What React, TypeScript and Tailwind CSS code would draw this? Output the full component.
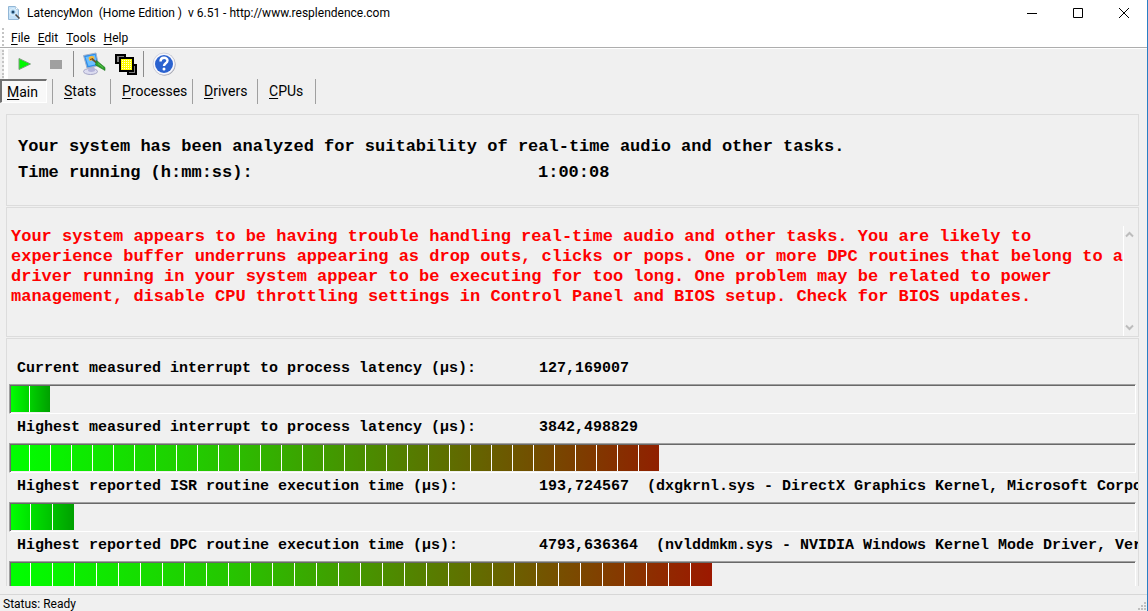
import type { ReactNode } from 'react';

interface Measurement {
  label: string;
  value: string;
  detail?: string;
  blocks: string[];
  first: string;
  fill: string;
}

const narrow = 'w-[20px]';
const wide = 'w-[21px]';

const measurements: Measurement[] = [
  { label: 'Current measured interrupt to process latency (µs):', value: '127,169007', blocks: Array(1).fill(narrow), first: 'w-[18px]', fill: 'from-[#00ff00] to-[#00a000]' },
  { label: 'Highest measured interrupt to process latency (µs):', value: '3842,498829', blocks: Array(30).fill(narrow), first: 'w-[18px]', fill: 'from-[#00ff00] via-[#24c800] via-30% to-[#902000]' },
  { label: 'Highest reported ISR routine execution time (µs):', value: '193,724567', detail: '(dxgkrnl.sys - DirectX Graphics Kernel, Microsoft Corporation)', blocks: Array(2).fill(wide), first: 'w-[19px]', fill: 'from-[#00ff00] to-[#00a000]' },
  { label: 'Highest reported DPC routine execution time (µs):', value: '4793,636364', detail: '(nvlddmkm.sys - NVIDIA Windows Kernel Mode Driver, Version 388.13)', blocks: Array(31).fill(wide), first: 'w-[19px]', fill: 'from-[#00ff00] via-[#24c800] via-30% to-[#9c1800]' },
];

const tabs = [
  { name: 'Stats', width: 'w-[58px]' },
  { name: 'Processes', width: 'w-[82px]' },
  { name: 'Drivers', width: 'w-[65px]' },
  { name: 'CPUs', width: 'w-[58px]' },
];

function Mnemonic({ text }: { text: string }) {
  return <><span className="underline underline-offset-2">{text[0]}</span>{text.slice(1)}</>;
}

function AppIcon() {
  return (
    <svg width="16" height="16" viewBox="0 0 16 16">
      <path d="M2.500 1.500h7l3 3v10h-10z" fill="#c3e1f8" stroke="#93b7d6" />
      <path d="M9.500 1.500v3h3" fill="#fff" stroke="#b4cde0" />
      <circle cx="7" cy="7" r="3.300" fill="#a9d4f2" stroke="#e8f4fc" />
      <circle cx="7" cy="7" r="1.500" fill="#1c4568" />
      <path d="M9.500 9.500l4 4" stroke="#4a4540" strokeWidth="1.600" />
    </svg>
  );
}

function ConfigureIcon() {
  return (
    <svg width="24" height="24" viewBox="0 0 24 24">
      <ellipse cx="8.500" cy="19.500" rx="7" ry="3" fill="#dcdcf0" stroke="#a5a5c6" />
      <path d="M7 14l5-1 1 6q-4 2-7 0z" fill="#b4b4da" />
      <path d="M1.500 3.500L14 1l2.500 12.500L5 16z" fill="#2f8eea" stroke="#a3b1c8" />
      <path d="M3.500 5l9.500-2 2 9-8.500 2z" fill="#6cc0ff" />
      <path d="M6.500 6c2-3 6-2 6 0l-1 2-4 1z" fill="#f4b83a" />
      <path d="M8 7.500l3-1" stroke="#7b4a10" />
      <path d="M10 7l5 4" stroke="#6e5530" strokeWidth="2" />
      <path d="M14.500 8.500l8.500 7v3l-9.500-5.500z" fill="#2ba02b" stroke="#1c741c" strokeWidth="0.600" />
      <path d="M16 11.500l5 4" stroke="#5cc44c" />
    </svg>
  );
}

function WindowsIcon() {
  return (
    <svg width="22" height="21" viewBox="0 0 22 21" shapeRendering="crispEdges">
      <path d="M0 0h11v10H0zM12 10h10v11H12z" fill="#000" />
      <path d="M2 2h7v6H2zM14 12h6v7h-6z" fill="#808080" />
      <path d="M4 3h15v15H4z" fill="#000" />
      <path d="M6 5h11v11H6z" fill="#ffff00" />
      {[6, 8, 10, 12, 14].map((y) => [7, 9, 11, 13, 15].map((x) => <rect key={x + '-' + y} x={x} y={y} width="1" height="1" fill="#fffde0" />))}
    </svg>
  );
}

function HelpIcon() {
  return (
    <svg width="24" height="24" viewBox="0 0 24 24">
      <circle cx="12.500" cy="12.500" r="11" fill="#9c9ca6" />
      <circle cx="12" cy="12" r="11" fill="#f7f7fc" stroke="#b3b7c6" strokeWidth="0.500" />
      <circle cx="12" cy="12" r="9" fill="#2a62cf" />
      <path d="M8.500 9.500c0-5 7-4.500 7-1 0 3-3.500 2.500-3.500 5.500" fill="none" stroke="#fff" strokeWidth="2.400" />
      <circle cx="12" cy="17" r="1.500" fill="#fff" />
    </svg>
  );
}

function ToolButton({ label, children }: { label: string; children: ReactNode }) {
  return <button aria-label={label} className="flex h-7 w-8 items-center justify-center">{children}</button>;
}

function Meter({ item }: { item: Measurement }) {
  return (
    <div>
      <div className="flex h-[29px] items-center overflow-hidden whitespace-pre pl-2 font-['Liberation_Mono',monospace] text-[15px] font-bold">
        <span className="w-[522px] shrink-0">{item.label}</span>
        <span>{item.value}{item.detail && '  ' + item.detail}</span>
      </div>
      <div className="mr-[2px] h-[30px] border border-b-white border-l-[#a0a0a0] border-r-white border-t-[#a0a0a0]">
        <div className="h-full border-l border-t border-[#696969]">
          <div className={'flex h-[26px] w-fit gap-px bg-linear-to-r/srgb ' + item.fill}>
            <span className={'box-content border-r border-white ' + item.first} />
            {item.blocks.map((w, i) => <span key={i} className={i < item.blocks.length - 1 ? '-ml-px box-content border-r border-white ' + w : '-ml-px ' + w} />)}
          </div>
        </div>
      </div>
    </div>
  );
}

export default function App() {
  return (
    <div className="flex h-screen flex-col overflow-hidden border-r border-[#2a7fc4] bg-[#f0f0f0] font-['Roboto',sans-serif] text-black">
      <header className="flex h-[26px] shrink-0 items-center bg-white pl-[6px] text-[12px]">
        <AppIcon />
        <h1 className="flex-1 whitespace-pre pl-[5px]">LatencyMon  (Home Edition )  v 6.51 - http://www.resplendence.com</h1>
        <div className="flex">
          <button aria-label="Minimize" className="flex w-[46px] justify-center"><svg width="10" height="10"><path d="M0 5.500h10" stroke="#000" /></svg></button>
          <button aria-label="Maximize" className="flex w-[46px] justify-center"><svg width="10" height="10"><path d="M.5.5h9v9h-9z" fill="none" stroke="#000" /></svg></button>
          <button aria-label="Close" className="flex w-[46px] justify-center"><svg width="10" height="10"><path d="M0 0l10 10M10 0L0 10" stroke="#000" /></svg></button>
        </div>
      </header>
      <nav className="flex h-[22px] shrink-0 items-center border-b border-[#adadad] bg-white pl-[2px] text-[12px]">
        <span className="mr-[7px] h-[18px] border-l-2 border-dotted border-[#c4c4c4]" />
        <div className="flex gap-2 pt-[3px]">
          {['File', 'Edit', 'Tools', 'Help'].map((m) => <button key={m}><Mnemonic text={m} /></button>)}
        </div>
      </nav>
      <div className="flex h-[31px] shrink-0 items-center border-t border-white pl-[2px]">
        <span className="h-[28px] border-l-2 border-dotted border-[#c4c4c4]" />
        <span className="h-full w-[4px] bg-white" />
        <ToolButton label="Start"><svg width="13" height="12"><path d="M1 .5v11L12.500 6z" fill="#00f800" stroke="#7d9a7d" /></svg></ToolButton>
        <ToolButton label="Stop"><span className="h-[9px] w-3 bg-[#a0a0a0]" /></ToolButton>
        <span className="mr-1 ml-px h-[26px] border-l border-[#8c8c8c]" />
        <ToolButton label="Configure"><ConfigureIcon /></ToolButton>
        <ToolButton label="Windows"><WindowsIcon /></ToolButton>
        <span className="mr-1 ml-px h-[26px] border-l border-[#8c8c8c]" />
        <ToolButton label="Help"><HelpIcon /></ToolButton>
      </div>
      <div role="tablist" className="flex h-[26px] shrink-0 text-[14px] leading-[20px]">
        <button role="tab" aria-selected="true" className="h-[24px] w-[47px] border-b border-l-2 border-r border-t-2 border-b-white border-l-[#707070] border-r-white border-t-[#707070] bg-[#f8f8f8] pl-[5px] text-left"><Mnemonic text="Main" /></button>
        <span className="ml-[5px] h-[25px] border-l border-[#a0a0a0]" />
        {tabs.map((t) => <button key={t.name} role="tab" aria-selected="false" className={'h-[25px] border-r border-[#a0a0a0] pb-[2px] pl-[11px] text-left ' + t.width}><Mnemonic text={t.name} /></button>)}
      </div>
      <main className="flex min-h-0 flex-1 flex-col gap-px pl-[6px] pr-2 pt-[9px]">
        <section className="h-[92px] shrink-0 border border-[#dcdcdc] pl-[11px] pt-[19px] font-['Liberation_Mono',monospace] text-[17px] font-bold leading-[26px]">
          <p>Your system has been analyzed for suitability of real-time audio and other tasks.</p>
          <p className="flex"><span className="w-[520px]">Time running (h:mm:ss):</span><span>1:00:08</span></p>
        </section>
        <section className="flex h-[130px] shrink-0 border border-[#dcdcdc] pt-[18px]">
          <p className="flex-1 whitespace-pre pl-1 pt-px font-['Liberation_Mono',monospace] text-[17px] font-bold leading-[20px] text-[#ff0000]">
            {`Your system appears to be having trouble handling real-time audio and other tasks. You are likely to
experience buffer underruns appearing as drop outs, clicks or pops. One or more DPC routines that belong to a
driver running in your system appear to be executing for too long. One problem may be related to power
management, disable CPU throttling settings in Control Panel and BIOS setup. Check for BIOS updates.`}
          </p>
          <div className="flex flex-col items-center justify-between border-l border-white py-[5px] pl-px pr-1">
            <svg width="9" height="7"><path d="M1 5.500l3.500-3.500L8 5.500" fill="none" stroke="#bcbcbc" strokeWidth="2" /></svg>
            <svg width="9" height="7"><path d="M1 1.500l3.500 3.500L8 1.500" fill="none" stroke="#bcbcbc" strokeWidth="2" /></svg>
          </div>
        </section>
        <section className="min-h-0 flex-1 overflow-hidden border border-b-0 border-[#dcdcdc] pl-[2px] pt-4">
          {measurements.map((m) => <Meter key={m.label} item={m} />)}
        </section>
      </main>
      <footer className="mt-2 flex h-[17px] shrink-0 items-end justify-between border-t border-[#d7d7d7] pl-[3px] text-[12px] leading-[14px]">
        <span>Status: Ready</span>
        <svg width="11" height="11" fill="#bfbfbf"><path d="M8 2h2v2H8zM5 5h2v2H5zM8 5h2v2H8zM2 8h2v2H2zM5 8h2v2H5zM8 8h2v2H8z" /></svg>
      </footer>
    </div>
  );
}
